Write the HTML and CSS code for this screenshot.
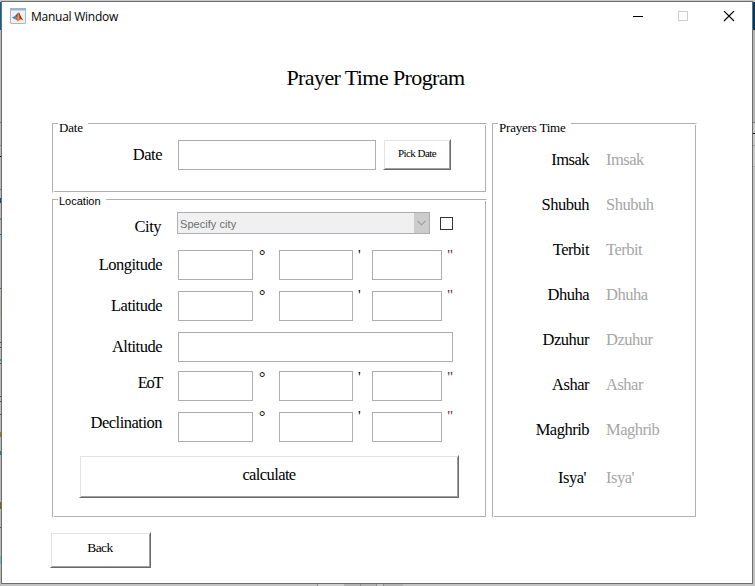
FILE: index.html
```html
<!DOCTYPE html>
<html lang="en">
<head>
<meta charset="utf-8">
<title>Manual Window</title>
<link rel="stylesheet" href="styles.css">
</head>
<body>
<div class="window">
  <header class="titlebar">
    <svg class="app-icon" width="16" height="16" viewBox="0 0 16 16">
      <rect x=".5" y=".5" width="15" height="15" rx=".5" fill="#f1f1f1" stroke="#b4b4b8"/>
      <rect x="0" y="0" width="16" height="2.5" fill="#9fb4cd"/>
      <path d="M2 9.4 5.2 7.8 7 9.4 4.6 11.2Z" fill="#3f87b5"/>
      <path d="M5.2 7.8 8.5 4.2 7 9.6Z" fill="#315b88"/>
      <path d="M4.6 11.2 7 9.2 8.6 4.2C9.8 5 10.2 9 13.4 12.2 11.2 10.8 10 11 8 13.6 7.3 12 6 11 4.6 11.2Z" fill="#d9572b"/>
      <path d="M7.4 10.6 8.8 5.2 9 10.4 8 12.8Z" fill="#f3a23b"/>
      <path d="M8.8 4.2C10.1 6 10.6 9.4 13.4 12.2L10.2 10.6Z" fill="#8e2a20"/>
    </svg>
    <span class="caption">Manual Window</span>
    <svg class="controls" width="102" height="12" viewBox="0 0 102 12" fill="none" shape-rendering="crispEdges">
      <path d="M0 5.5H10" stroke="#000"/>
      <rect x="45.5" y=".5" width="9" height="9" stroke="#ccc"/>
      <path d="M91 0 101 10M101 0 91 10" stroke="#000" stroke-width="1.1" shape-rendering="auto"/>
    </svg>
  </header>

  <h1 class="title">Prayer Time Program</h1>

  <main class="panels">
    <div class="column">
      <section class="panel date-panel">
        <h2 class="legend">Date</h2>
        <div class="row date-row">
          <label class="name">Date</label>
          <span class="field"></span>
          <button class="btn pick">Pick Date</button>
        </div>
      </section>

      <section class="panel location-panel">
        <h2 class="legend sans">Location</h2>
        <div class="row city-row">
          <label class="name">City</label>
          <div class="select"><span>Specify city</span><i class="arrow"><svg width="9" height="6" viewBox="0 0 9 6"><path d="M.5 .8 4.5 4.8 8.5 .8" fill="none" stroke="#a0a0a0" stroke-width="1.2"/></svg></i></div>
          <span class="check"></span>
        </div>
        <div class="row dms lon">
          <label class="name">Longitude</label>
          <span class="field"></span><span class="unit deg">°</span>
          <span class="field"></span><span class="unit">'</span>
          <span class="field"></span><span class="unit sec">"</span>
        </div>
        <div class="row dms lat">
          <label class="name">Latitude</label>
          <span class="field"></span><span class="unit deg">°</span>
          <span class="field"></span><span class="unit">'</span>
          <span class="field"></span><span class="unit sec">"</span>
        </div>
        <div class="row alt">
          <label class="name">Altitude</label>
          <span class="field"></span>
        </div>
        <div class="row dms eot">
          <label class="name">EoT</label>
          <span class="field"></span><span class="unit deg">°</span>
          <span class="field"></span><span class="unit">'</span>
          <span class="field"></span><span class="unit sec">"</span>
        </div>
        <div class="row dms dec">
          <label class="name">Declination</label>
          <span class="field"></span><span class="unit deg">°</span>
          <span class="field"></span><span class="unit">'</span>
          <span class="field"></span><span class="unit sec">"</span>
        </div>
        <button class="btn calculate">calculate</button>
      </section>
    </div>

    <section class="panel prayers-panel">
      <h2 class="legend">Prayers Time</h2>
      <dl class="times">
        <dt>Imsak</dt><dd>Imsak</dd>
        <dt>Shubuh</dt><dd>Shubuh</dd>
        <dt>Terbit</dt><dd>Terbit</dd>
        <dt>Dhuha</dt><dd>Dhuha</dd>
        <dt>Dzuhur</dt><dd>Dzuhur</dd>
        <dt>Ashar</dt><dd>Ashar</dd>
        <dt>Maghrib</dt><dd>Maghrib</dd>
        <dt class="isya">Isya'</dt><dd class="isya">Isya'</dd>
      </dl>
    </section>
  </main>

  <button class="btn back">Back</button>
</div>
</body>
</html>
```

FILE: styles.css
```css
* { box-sizing: border-box; }

body {
  margin: 0;
  width: 755px;
  height: 586px;
  padding: 1px 2px 2px 1px;
  overflow: hidden;
  font-family: Gabriola, "Liberation Serif", serif;
  font-size: 16.5px;
  line-height: 20px;
  letter-spacing: -.5px;
  color: #000;
  /* slivers of the application behind the window */
  background:
    linear-gradient(#0064a8 28px, #b9b9b9 28px 120px, #777 120px 121px, #b9b9b9 121px 143px, #8a8a8a 143px 144px, #b9b9b9 144px 154px, #111 154px 155px, #b9b9b9 155px 187px, #777 187px 188px, #b9b9b9 188px 196px, #0a4f9e 196px 201px, #b9b9b9 201px 216px, #94803a 216px 218px, #8ec0d8 218px 222px, #b9b9b9 222px 232px, #3c6b3c 232px 233px, #8ec0d8 233px 237px, #b9b9b9 237px 286px, #3c6b3c 286px 287px, #b9b9b9 287px 296px, #a8bda3 296px 314px, #b9b9b9 314px 340px, #3c6b3c 340px 341px, #b9b9b9 341px 345px, #3c6b3c 345px 346px, #b9b9b9 346px 357px, #4b95bd 357px 359px, #b9b9b9 359px 361px, #3c6b3c 361px 362px, #b9b9b9 362px 394px, #3c6b3c 394px 395px, #b9b9b9 395px 399px, #3c6b3c 399px 400px, #b9b9b9 400px 412px, #3c6b3c 412px 413px, #b9b9b9 413px 430px, #9b7a24 430px 435px, #b9b9b9 435px 449px, #2d7da6 449px 453px, #b9b9b9 453px 500px, #80661f 500px 507px, #b9b9b9 507px 525px, #6b5a2b 525px 526px, #b9b9b9 526px 554px, #78b4d2 554px 562px, #b9b9b9 562px) 0 2px / 1px 584px no-repeat,
    linear-gradient(#003865 28px, #b5b5b5 28px 120px, #777 120px 121px, #c9c9c9 121px 131px, #111 131px 132px, #c9c9c9 132px 143px, #999 143px 144px, #c9c9c9 144px 164px, #aaa 164px 165px, #c3c3c3 165px) 753px 2px / 2px 584px no-repeat,
    linear-gradient(90deg, #c3c3c3 317px, #8f8f8f 317px 318px, #cfcfcf 318px 344px, #b2b2b2 344px 360px, #8f8f8f 360px 361px, #b2b2b2 361px 376px, #8f8f8f 376px 377px, #c3c3c3 377px 383px, #8f8f8f 383px 384px, #b2b2b2 384px 403px, #c3c3c3 403px) 0 584px / 753px 2px no-repeat,
    #c9c9c9;
}

.window {
  width: 752px;
  height: 583px;
  border: 1px solid #6e6e6e;
  background: #fff;
}

.titlebar {
  display: flex;
  height: 30px;
  padding: 6px 17px 0 8px;
}
.app-icon { flex: none; }
.caption {
  margin: -1px 0 0 5px;
  font: 12px/20px "Segoe UI", "Open Sans", sans-serif;
  letter-spacing: -.25px;
}
.controls { margin: 3px 0 0 auto; }

.title {
  margin: 34px 0 0;
  padding-right: 3px;
  font-size: 22px;
  font-weight: normal;
  line-height: 24px;
  letter-spacing: -.6px;
  text-align: center;
}

.panels {
  display: flex;
  gap: 5px;
  margin: 33px 0 0 50px;
}
.column {
  display: flex;
  flex-direction: column;
  gap: 6px;
}

.panel {
  position: relative;
  width: 435px;
  border: 1px solid #b0b0b0;
  border-right-color: #fff;
  border-bottom-color: #fff;
}
.panel::before {
  content: "";
  position: absolute;
  inset: 1px 0 0 1px;
  border: solid #b0b0b0;
  border-width: 0 1px 1px 0;
  pointer-events: none;
}
.date-panel { height: 70px; }
.location-panel { height: 319px; }
.prayers-panel { width: 205px; height: 395px; }

.legend {
  position: absolute;
  left: 5px;
  top: -2px;
  margin: 0;
  padding: 0 5px 0 1px;
  background: #fff;
  font-size: 13px;
  font-weight: normal;
  line-height: 12px;
  letter-spacing: -.2px;
}
.legend.sans {
  top: -5px;
  font: 11px/12px "Liberation Sans", sans-serif;
  letter-spacing: 0;
}

.row { display: flex; }
.name {
  width: 109px;
  margin-right: 16px;
  text-align: right;
  white-space: nowrap;
}
.field {
  flex: none;
  height: 30px;
  border: 1px solid #abadb3;
  background: #fff;
}

.date-row { padding-top: 15px; }
.date-row .name { padding-top: 6px; }
.date-row .field { width: 198px; margin-top: 1px; }

.btn {
  display: block;
  padding: 0;
  border: 1px solid #fff;
  border-right-color: #696969;
  border-bottom-color: #696969;
  background: #fff;
  box-shadow: inset 1px 1px #e3e3e3, inset -1px -1px #a0a0a0;
  font-family: inherit;
  font-size: 16.5px;
  letter-spacing: -.6px;
  color: #000;
}
.pick { width: 68px; height: 31px; margin-left: 7px; padding-bottom: 2px; font-size: 11px; line-height: 27px; letter-spacing: -.55px; }
.calculate { width: 380px; height: 43px; margin: 13px 0 0 26px; padding-bottom: 4px; }
.back { width: 101px; height: 36px; margin: 14px 0 0 48px; padding: 0 1px 5px 0; font-size: 13.5px; }

.city-row { height: 22px; margin: 12px 0 16px; }
.city-row .name { margin-right: 15px; padding: 5px 1px 0 0; }
.select {
  display: flex;
  justify-content: space-between;
  width: 253px;
  padding-left: 2px;
  border: 1px solid #abadb3;
  background: #f0f0f0;
  font: 11px/22px "Liberation Sans", sans-serif;
  letter-spacing: .05px;
  color: #6d6d6d;
}
.arrow {
  display: flex;
  align-items: center;
  justify-content: center;
  width: 15px;
  background: #ccc;
}
.check {
  width: 13px;
  height: 13px;
  margin: 5px 0 0 10px;
  border: 1px solid #333;
}

.dms .field:nth-of-type(1) { width: 75px; }
.dms .field:nth-of-type(3) { width: 74px; }
.dms .field:nth-of-type(5) { width: 70px; }
.unit { width: 19px; margin-top: -5px; padding-left: 5px; font-size: 15px; }
.deg { width: 26px; margin-top: -4px; padding-left: 6px; font-size: 16px; }
.lat .unit, .dec .unit { margin-top: -6px; }
.lat .deg, .dec .deg { margin-top: -5px; }
.eot .unit { margin-top: -4px; }
.eot .deg { margin-top: -3px; }
.sec { color: #6e2a1c; }
.alt .field { width: 275px; }

.lon, .lat, .alt, .eot, .dec { height: 30px; }
.lat, .alt, .dec { margin-top: 11px; }
.eot { margin-top: 9px; }
.lon .name, .lat .name, .alt .name { padding-top: 5px; }
.eot .name { padding-top: 2px; letter-spacing: -1.4px; }
.dec .name { padding-top: 1px; }

.times {
  display: grid;
  grid-template-columns: 96px 1fr;
  grid-template-rows: repeat(7, 45px) 20px;
  column-gap: 17px;
  margin: 26px 0 0;
}
.times dt { text-align: right; }
.times dd { margin: 0; color: #a6a6a6; }
.times .isya { padding-top: 3px; }
.times dt.isya { padding-right: 3px; }
```
